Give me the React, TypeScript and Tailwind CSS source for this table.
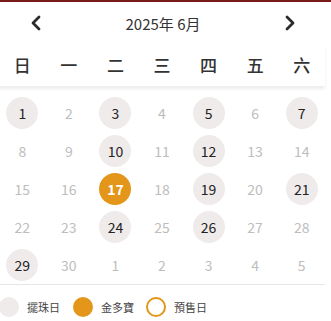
import React from "react";

type Day = { n: number; kind: "plain" | "bead" | "gold" | "out" };

const beads = [1, 3, 5, 7, 10, 12, 19, 21, 24, 26, 29];

function buildDays(): Day[] {
    const days: Day[] = [];
    for (let d = 1; d <= 30; d++) {
        days.push({ n: d, kind: d === 17 ? "gold" : beads.includes(d) ? "bead" : "plain" });
    }
    for (let d = 1; d <= 5; d++) days.push({ n: d, kind: "out" });
    return days;
}

const weekdays = ["日", "一", "二", "三", "四", "五", "六"];

function Chevron({ dir }: { dir: "left" | "right" }) {
    return (
        <svg width="12" height="16" viewBox="0 0 12 16" fill="none">
            <path
                d={dir === "left" ? "M9 2 L3 8 L9 14" : "M3 2 L9 8 L3 14"}
                stroke="#2b2b2b"
                strokeWidth="2.8"
                strokeLinecap="round"
                strokeLinejoin="round"
            />
        </svg>
    );
}

export default function App() {
    const days = buildDays();
    return (
        <div
            className="w-[331px] h-[321px] bg-white overflow-hidden border-t-2 border-[#7a1b1b]"
            style={{ fontFamily: '"Noto Sans CJK TC", "Noto Sans", sans-serif' }}
        >
            <div className="w-[325px]">
                <div className="h-[42px] flex items-center justify-between pl-[30px] pr-[29px]">
                    <Chevron dir="left" />
                    <span className="text-[15px] text-[#333] leading-none">2025年 6月</span>
                    <Chevron dir="right" />
                </div>

                <div className="h-[42px] grid grid-cols-7 items-center shadow-[0_3px_3px_rgba(0,0,0,0.07)] -ml-[1px] w-[326px]">
                    {weekdays.map((w) => (
                        <div key={w} className="text-center text-[17px] font-medium text-[#333] leading-none pb-[2px]">
                            {w}
                        </div>
                    ))}
                </div>

                <div className="grid grid-cols-7 pt-[8px] -ml-[1px] w-[326px]">
                    {days.map((d, i) => (
                        <div key={i} className="h-[38px] flex items-center justify-center">
                            <div
                                className={
                                    "w-[32px] h-[32px] rounded-full flex items-center justify-center text-[14px] leading-none " +
                                    (d.kind === "gold"
                                        ? "bg-[#e3961a] text-white font-bold"
                                        : d.kind === "bead"
                                        ? "bg-[#f0ebeb] text-[#222]"
                                        : "text-[#bdbdbd]")
                                }
                            >
                                {d.n}
                            </div>
                        </div>
                    ))}
                </div>

                <div className="border-t border-[#e6e6e6] pt-[12px] flex items-center -ml-[1px]">
                    <span className="w-[20px] h-[20px] rounded-full bg-[#f0ebeb]" />
                    <span className="ml-[8px] text-[11px] text-[#444] leading-none">擺珠日</span>
                    <span className="ml-[13px] w-[20px] h-[20px] rounded-full bg-[#e3961a]" />
                    <span className="ml-[8px] text-[11px] text-[#444] leading-none">金多寶</span>
                    <span className="ml-[12px] w-[20px] h-[20px] rounded-full border-2 border-[#e3961a]" />
                    <span className="ml-[8px] text-[11px] text-[#444] leading-none">預售日</span>
                </div>
            </div>
        </div>
    );
}
